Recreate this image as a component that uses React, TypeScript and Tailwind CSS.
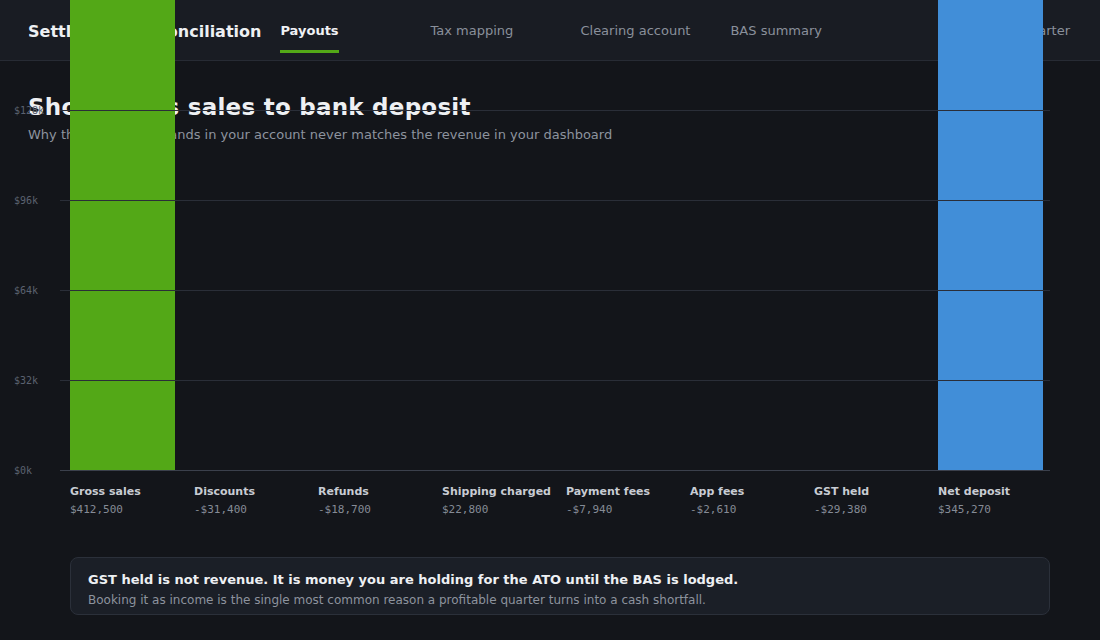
const cols = [
  { name: "Gross sales", value: "$412,500", h: 470, color: "bg-[#53a817]" },
  { name: "Discounts", value: "-$31,400", h: 0, color: "bg-[#d9534f]" },
  { name: "Refunds", value: "-$18,700", h: 0, color: "bg-[#d9534f]" },
  { name: "Shipping charged", value: "$22,800", h: 0, color: "bg-[#53a817]" },
  { name: "Payment fees", value: "-$7,940", h: 0, color: "bg-[#d9534f]" },
  { name: "App fees", value: "-$2,610", h: 0, color: "bg-[#d9534f]" },
  { name: "GST held", value: "-$29,380", h: 0, color: "bg-[#e0a030]" },
  { name: "Net deposit", value: "$345,270", h: 470, color: "bg-[#418ed8]" },
];

const ticks = ["$128k", "$96k", "$64k", "$32k", "$0k"];

const tabs = ["Payouts", "Tax mapping", "Clearing account", "BAS summary"];

export default function App() {
  return (
    <div className="w-full h-[640px] overflow-hidden bg-[#13151a] font-['DejaVu_Sans',sans-serif] text-[#eef0f3]">
      <header className="relative z-0 h-[61px] flex items-stretch pl-7 pr-[30px] bg-[#191c23] border-b border-[#272b34]">
        <h1 className="self-center pt-[3px] text-[16px] font-bold mr-[19px]">Settlement Reconciliation</h1>
        {tabs.map((t, i) => (
          <div key={t} className="w-[150px] pt-[23px] flex items-start">
            <div className="flex flex-col">
              <span className={i === 0 ? "text-[13px] leading-[16px] font-bold text-[#f0f2f5]" : "text-[13px] leading-[16px] text-[#8a909b]"}>
                {t}
              </span>
              {i === 0 && <span className="mt-[11px] h-[3px] bg-[#53a817]" />}
            </div>
          </div>
        ))}
        <span className="ml-auto pt-[23px] text-[13px] leading-[16px] text-[#8a909b]">This quarter</span>
      </header>

      <div className="pl-7 pt-[32px] h-[49px]">
        <h2 className="text-[23px] leading-[28px] font-bold tracking-[0.25px]">Show gross sales to bank deposit</h2>
        <p className="text-[13px] leading-[18px] mt-[5px] text-[#8d939e]">
          Why the money that lands in your account never matches the revenue in your dashboard
        </p>
      </div>

      <div className="relative z-10 h-[361px] w-[1050px]">
        <div className="absolute left-[70px] bottom-[1px] flex items-end gap-[19px]">
          {cols.map((c) => (
            <div key={c.name} className={`w-[105px] ${c.color}`} style={{ height: c.h }} />
          ))}
        </div>
        <div className="relative h-full flex flex-col justify-between">
          {ticks.map((t, i) => (
            <div key={t} className="h-px flex items-center">
              <span className="w-[60px] pl-[14px] text-[10px] leading-[12px] font-['DejaVu_Sans_Mono',monospace] text-[#5b6270]">
                {t}
              </span>
              <div className={i === ticks.length - 1 ? "flex-1 h-px bg-[#3b404c]" : "flex-1 h-px bg-[#2a2e38]"} />
            </div>
          ))}
        </div>
      </div>

      <div className="flex gap-[19px] pl-[70px] pt-[14px]">
        {cols.map((c) => (
          <div key={c.name} className="w-[105px]">
            <div className="text-[11px] leading-[14px] font-bold text-[#c8ccd3] whitespace-nowrap">{c.name}</div>
            <div className="mt-[4px] text-[11px] leading-[14px] font-['DejaVu_Sans_Mono',monospace] text-[#858b96]">
              {c.value}
            </div>
          </div>
        ))}
      </div>

      <div className="ml-[70px] mt-[40px] w-[980px] h-[58px] rounded-lg border border-[#2b303a] bg-[#1b1f27] pl-[17px] pt-[13px]">
        <p className="text-[13px] leading-[17px] font-bold text-[#eef0f3]">
          GST held is not revenue. It is money you are holding for the ATO until the BAS is lodged.
        </p>
        <p className="mt-[4px] text-[12px] leading-[16px] text-[#8d939e]">
          Booking it as income is the single most common reason a profitable quarter turns into a cash shortfall.
        </p>
      </div>
    </div>
  );
}
